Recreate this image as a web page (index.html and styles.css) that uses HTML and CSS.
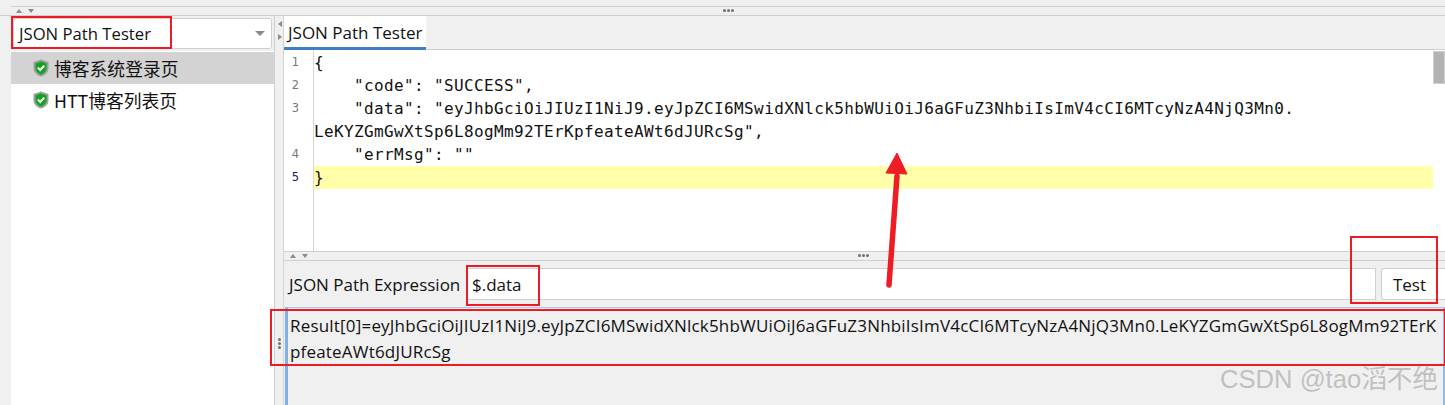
FILE: index.html
```html
<!DOCTYPE html>
<html lang="zh">
<head>
<meta charset="utf-8">
<title>JSON Path Tester</title>
<link rel="stylesheet" href="styles.css">
</head>
<body>
<div class="app">
  <div class="top-split">
    <span class="arrow-up top-up"></span><span class="arrow-down top-down"></span>
    <span class="dots-h top-dots"><i></i><i></i><i></i></span>
  </div>
  <div class="main">
    <aside class="side">
      <div class="combo"><span>JSON Path Tester</span><span class="arrow-down combo-arrow"></span></div>
      <ul class="tree">
        <li class="row selected">
          <svg class="shield" viewBox="0 0 18 18"><path d="M9 .5 16.500 3v6c0 4.200-3 7-7.500 8.500C4.500 16 1.500 13.200 1.500 9V3z" fill="#9aa09c"/><path d="M9 2.500 14.500 4.500v4.500c0 3.200-2.300 5.500-5.500 6.700C5.800 14.500 3.500 12.200 3.500 9V4.500z" fill="#12a41f"/><path d="M5.800 8.600 8.200 11l4-4.200" fill="none" stroke="#fff" stroke-width="2"/></svg>
          <span>博客系统登录页</span>
        </li>
        <li class="row">
          <svg class="shield" viewBox="0 0 18 18"><path d="M9 .5 16.500 3v6c0 4.200-3 7-7.500 8.500C4.500 16 1.500 13.200 1.500 9V3z" fill="#9aa09c"/><path d="M9 2.500 14.500 4.500v4.500c0 3.200-2.300 5.500-5.500 6.700C5.800 14.500 3.500 12.200 3.500 9V4.500z" fill="#12a41f"/><path d="M5.800 8.600 8.200 11l4-4.200" fill="none" stroke="#fff" stroke-width="2"/></svg>
          <span>HTT博客列表页</span>
        </li>
      </ul>
    </aside>
    <div class="v-split">
      <span class="arrow-left"></span><span class="arrow-right"></span>
      <span class="dots-v"><i></i><i></i><i></i></span>
    </div>
    <section class="content">
      <div class="tabs"><div class="tab">JSON Path Tester</div></div>
      <div class="editor">
        <div class="gutter"><div>1</div><div>2</div><div class="wrap2">3</div><div>4</div><div class="gutter-current">5</div></div>
        <pre class="code"><div>{</div><div>    "code": "SUCCESS",</div><div>    "data": "eyJhbGciOiJIUzI1NiJ9.eyJpZCI6MSwidXNlck5hbWUiOiJ6aGFuZ3NhbiIsImV4cCI6MTcyNzA4NjQ3Mn0.</div><div>LeKYZGmGwXtSp6L8ogMm92TErKpfeateAWt6dJURcSg",</div><div>    "errMsg": ""</div><div class="current">}</div></pre>
        <div class="scrollbar"><div class="thumb"></div></div>
      </div>
      <div class="h-split">
        <span class="arrow-up"></span><span class="arrow-down"></span>
        <span class="dots-h split-dots"><i></i><i></i><i></i></span>
      </div>
      <div class="expr">
        <label class="expr-label">JSON Path Expression</label>
        <div class="expr-input">$.data</div>
        <div class="btn">Test</div>
      </div>
      <div class="result">
        <div>Result[0]=eyJhbGciOiJIUzI1NiJ9.eyJpZCI6MSwidXNlck5hbWUiOiJ6aGFuZ3NhbiIsImV4cCI6MTcyNzA4NjQ3Mn0.LeKYZGmGwXtSp6L8ogMm92TErK</div>
        <div>pfeateAWt6dJURcSg</div>
      </div>
    </section>
  </div>
</div>
<div class="mark mark-combo"></div>
<div class="mark mark-test"></div>
<div class="mark mark-data"></div>
<div class="mark mark-result"></div>
<svg class="red-arrow" viewBox="0 0 40 160"><path d="M12 135 20 26" stroke="#ee1c25" stroke-width="5.500" stroke-linecap="round" fill="none"/><path d="M20 3 30 24 9 23z" fill="#ee1c25" stroke="#ee1c25"/></svg>
<div class="watermark">CSDN @tao滔不绝</div>
</body>
</html>
```
FILE: styles.css
```css
* { box-sizing: border-box; }
html, body { margin: 0; padding: 0; height: 405px; overflow: hidden; background: #f0f0f0; }
body { position: relative; color: #111; font-family: "Open Sans", "Noto Sans CJK SC", sans-serif; font-size: 17px; }
.app { width: 1445px; height: 405px; display: flex; flex-direction: column; }

.top-split { height: 16px; padding-left: 11px; position: relative; border-bottom: 1px solid #cfcfcf; }
.top-split::before { content: ""; position: absolute; left: 11px; right: 0; top: 6px; border-top: 1px solid #cfcfcf; }
.arrow-up, .arrow-down { display: inline-block; width: 0; height: 0; border-left: 3.500px solid transparent; border-right: 3.500px solid transparent; }
.arrow-up { border-bottom: 4px solid #8a8a8a; }
.arrow-down { border-top: 4px solid #8a8a8a; }
.top-up, .top-down { position: absolute; top: 9px; }
.top-up { left: 16px; }
.top-down { left: 28px; }
.dots-h { display: flex; gap: 1px; }
.dots-h i, .dots-v i { display: block; width: 3px; height: 3px; border-radius: 50%; background: #707070; }
.top-dots { position: absolute; left: 723px; top: 9px; }

.main { flex: 1; display: flex; min-height: 0; }
.side { width: 263px; margin-left: 11px; background: #fff; display: flex; flex-direction: column; }
.combo { height: 35px; background: #f0f0f0; padding: 2px; position: relative; display: flex; align-items: center; justify-content: space-between; font-size: 16.700px; }
.combo > span:first-child { padding-left: 6px; }
.combo::before { content: ""; position: absolute; left: 2px; right: 2px; top: 2px; bottom: 2px; background: #fff; border: 1px solid #d0d0d0; border-radius: 3px; }
.combo > span { position: relative; }
.combo-arrow { margin-right: 7px; border-left-width: 5px; border-right-width: 5px; border-top-width: 5px; }
.tree { list-style: none; margin: 1px 0 0; padding: 0; font-size: 17.800px; }
.row { height: 32px; display: flex; align-items: center; padding-left: 21px; gap: 4px; font-family: "Noto Sans CJK SC", sans-serif; }
.row.selected { background: #d3d3d3; }
.shield { width: 18px; height: 18px; flex: none; }

.v-split { width: 10px; border-left: 1px solid #cfcfcf; border-right: 1px solid #d4d4d4; position: relative; }
.arrow-left, .arrow-right { position: absolute; left: 3px; width: 0; height: 0; border-top: 3.500px solid transparent; border-bottom: 3.500px solid transparent; }
.arrow-left { top: 5px; border-right: 4px solid #8a8a8a; }
.arrow-right { top: 18px; border-left: 4px solid #8a8a8a; }
.dots-v { position: absolute; left: 3px; top: 322px; display: flex; flex-direction: column; gap: 1px; }

.content { width: 1161px; display: flex; flex-direction: column; }
.tabs { height: 34px; background: #f0f0f0; border-bottom: 1px solid #cfcfcf; position: relative; }
.tab { width: 142px; height: 34px; background: #fff; border-bottom: 3px solid #3f7fc4; padding-left: 4px; line-height: 33px; position: relative; }
.editor { height: 201px; background: #fff; display: flex; }
.gutter { width: 30px; border-right: 1px solid #d8d8d8; padding-top: 1px; font-family: "DejaVu Sans", sans-serif; font-size: 11.500px; color: #777; line-height: 23px; text-align: right; padding-right: 14px; }
.wrap2 { height: 46px; }
.gutter-current { color: #1a1a5e; }
.code { flex: 1; margin: 0; padding-top: 1px; font-family: "DejaVu Sans Mono", monospace; font-size: 16px; letter-spacing: .37px; line-height: 23px; color: #111; }
.current { background: #ffffaa; }
.scrollbar { width: 12px; padding-top: 1px; }
.thumb { height: 33px; background: #b3b3b3; border: 1px solid #cfcfcf; }

.h-split { height: 10px; border-top: 1px solid #cfcfcf; border-bottom: 1px solid #cfcfcf; position: relative; flex: none; }
.h-split .arrow-up, .h-split .arrow-down { position: absolute; top: 2px; }
.h-split .arrow-up { left: 6px; }
.h-split .arrow-down { left: 18px; }
.split-dots { position: absolute; left: 574px; top: 2px; }

.expr { height: 46px; display: flex; align-items: flex-start; padding: 7px 0 0 5px; flex: none; }
.expr-label { width: 177px; line-height: 33px; }
.expr-input { width: 910px; height: 32px; background: #fff; border: 1px solid #d0d0d0; line-height: 31px; padding-left: 5px; }
.btn { width: 64px; height: 32px; margin-left: 5px; background: #fff; border: 1px solid #d0d0d0; border-radius: 3px 0 0 3px; border-right: 0; padding-right: 8px; text-align: center; line-height: 32px; }
.result { flex: 1; margin-left: 1px; border-top: 1px solid #a9c8ee; border-left: 3px solid #7fb0e6; border-right: 2px solid #8fbaea; padding: 5px 0 0 2px; line-height: 25.500px; letter-spacing: .19px; white-space: nowrap; }

.mark { position: absolute; border: 2px solid #ed1c24; pointer-events: none; }
.mark-combo { left: 11px; top: 16px; width: 161px; height: 33px; }
.mark-test { left: 1350px; top: 236px; width: 88px; height: 68px; }
.mark-data { left: 466px; top: 265px; width: 74px; height: 41px; }
.mark-result { left: 270px; top: 309px; width: 1176px; height: 57px; }
.red-arrow { position: absolute; left: 877px; top: 150px; width: 40px; height: 160px; }
.watermark { position: absolute; left: 1220px; top: 364px; font-family: "Liberation Sans", "Noto Sans CJK SC", sans-serif; font-size: 25.600px; line-height: 30px; color: rgba(150,150,150,.55); white-space: nowrap; }
```
